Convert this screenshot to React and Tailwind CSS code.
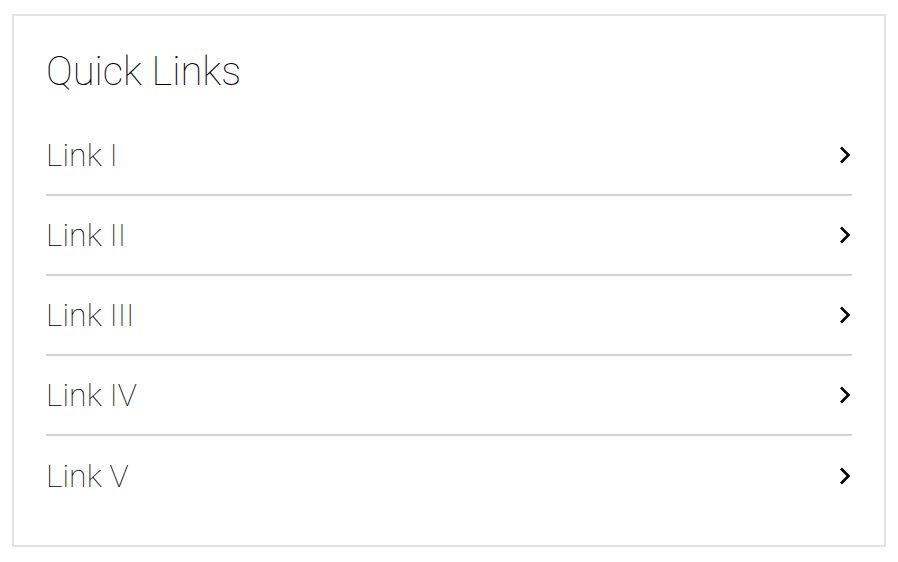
import React from 'react';

const links = ['Link I', 'Link II', 'Link III', 'Link IV', 'Link V'];

const Chevron = () => (
    <svg width="14" height="20" viewBox="0 0 14 20" fill="none" className="shrink-0">
        <path d="M3 2.5L10.5 10L3 17.5" stroke="#000" strokeWidth="2.6" />
    </svg>
);

export default function App() {
    return (
        <div className="w-[898px] h-[562px] bg-white pt-[14px] px-[12px]" style={{ fontFamily: 'Roboto, "Liberation Sans", sans-serif' }}>
            <div className="h-[533px] border-2 border-[#e0e2e5] px-8 pt-8">
                <h2 className="text-[40px] leading-[48px] font-thin text-black mb-[20px]">Quick Links</h2>
                <ul>
                    {links.map((label, i) => (
                        <li
                            key={label}
                            className={`flex items-center justify-between h-[80px] ${i < links.length - 1 ? 'border-b-2 border-[#d2d2d2]' : ''}`}
                        >
                            <span className="text-[32px] font-thin text-black">{label}</span>
                            <Chevron />
                        </li>
                    ))}
                </ul>
            </div>
        </div>
    );
}
